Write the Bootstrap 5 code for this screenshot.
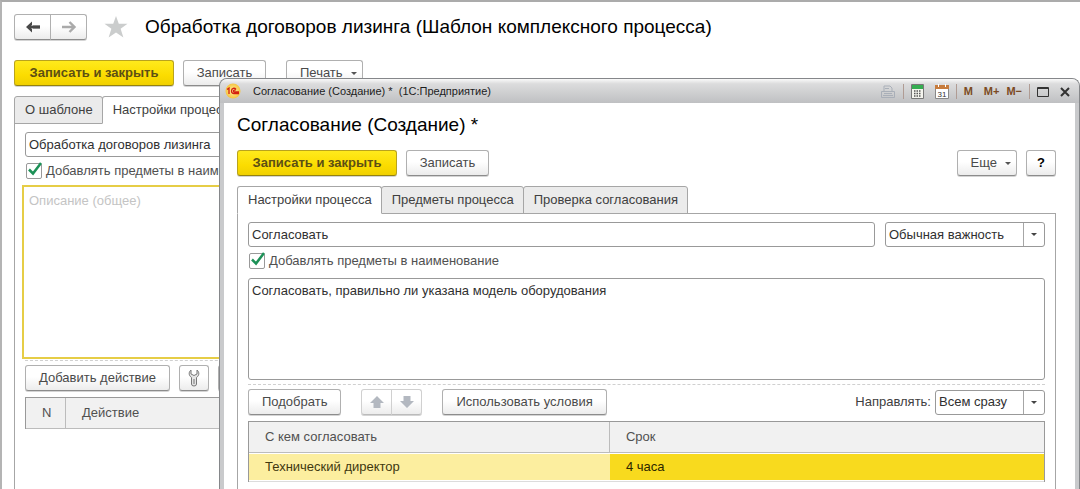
<!DOCTYPE html>
<html lang="ru">
<head>
<meta charset="utf-8">
<meta name="viewport" content="width=device-width, initial-scale=1">
<title>Обработка договоров лизинга</title>
<link href="https://cdn.jsdelivr.net/npm/bootstrap@5.3.0/dist/css/bootstrap.min.css" rel="stylesheet">
<style>
  body { font-family: "Liberation Sans", Arial, sans-serif; font-size: 13px; line-height: 16px; color: #404040; background: #fff; }
  .page-root { height: 100vh; }
  .app-window { min-height: 100vh; border-top: 2px solid #ababab; border-left: 2px solid #b4b4b4; padding: 12px 12px 0; }
  .form-title { font-size: 19px; line-height: 24px; color: #000; font-weight: 400; }
  .title-gap { margin-bottom: 13px; }
  .cmd-bar { gap: 9px; margin-bottom: 10px; }
  .app-cmd { margin-top: 20px; }
  .list-bar { margin-bottom: 6px; }
  .btn-form { --bs-btn-font-size: 13px; --bs-btn-line-height: 16px; --bs-btn-padding-y: 4px; --bs-btn-padding-x: 13px; --bs-btn-border-radius: 3px;
    --bs-btn-color: #4a4a4a; --bs-btn-border-color: #b0b0b0; --bs-btn-hover-color: #4a4a4a; --bs-btn-hover-border-color: #909090;
    height: 26px; white-space: nowrap; background: linear-gradient(#fff 45%, #ececec); border-bottom-color: #8c8c8c; box-shadow: 0 1px 0 #d4d4d4; }
  .btn-main { --bs-btn-color: #5c4f14; --bs-btn-hover-color: #5c4f14; --bs-btn-border-color: #b9a31d; font-weight: 700;
    background: linear-gradient(#ffea1c, #fbdc00 60%, #f0d000); border-bottom-color: #94820f; }
  .btn-wide { width: 160px; padding-left: 0; padding-right: 0; }
  .btn-mid { width: 83px; padding-left: 0; padding-right: 0; }
  .btn-menu { padding-right: 5px; }
  .btn-menu::after { content: ""; display: inline-block; margin-left: 8px; vertical-align: 2px; border: 3px solid transparent; border-top-color: #555; border-bottom: 0; }
  .btn-print { margin-left: 11px; }
  .btn-square { width: 30px; padding: 0; }
  .btn-arrow { width: 37px; padding: 0; }
  .btn-move { width: 31px; padding: 0; border-color: #d0d0d0; border-bottom-color: #bbb; }
  .btn-form svg { display: block; margin: auto; }
  .move-group { margin: 0 20px; }
  .tabs-form { --bs-nav-tabs-border-width: 0; }
  .tabs-form .nav-link { padding: 5px 9px 5px 10px; height: 28px; line-height: 16px; color: #404040; background: #ebebeb; border: 1px solid #a6a6a6; border-radius: 3px 3px 0 0; margin: 0 0 -1px -1px; white-space: nowrap; }
  .tabs-form .nav-item:first-child .nav-link { margin-left: 0; }
  .tabs-form .nav-link.active { background: #fff; border-color: #a6a6a6 #a6a6a6 #fff; color: #404040; position: relative; }
  .pane { border: 1px solid #a6a6a6; border-bottom: 0; padding: 8px 10px 0; }
  .field { font-size: 13px; line-height: 16px; padding: 3px; height: 25px; color: #303030; border: 1px solid #999; border-radius: 3px; background-color: #fff; }
  .row-gap { gap: 10px; }
  textarea.field { resize: none; display: block; padding-top: 4px; }
  .field::placeholder { color: #c4c4c4; }
  select.field { width: auto; padding-right: 26px; background-size: 21px 23px; background-position: right center;
    background-image: url("data:image/svg+xml,%3Csvg xmlns='http://www.w3.org/2000/svg' width='21' height='23'%3E%3Cpath d='M.5 0v23' stroke='%23a6a6a6'/%3E%3Cpath d='M8 10h6l-3 3z' fill='%23444'/%3E%3C/svg%3E"); }
  .sel-importance { flex: 0 0 160px; }
  .sel-route { flex: 0 0 110px; }
  .check { gap: 4px; margin: 6px 0 0 1px; height: 17px; color: #505050; white-space: nowrap; }
  .check input { appearance: none; width: 16px; height: 16px; margin: 0; border: 1px solid #999; border-radius: 2px; }
  .check-box { position: relative; width: 16px; height: 16px; flex: none; }
  .check-box svg { position: absolute; left: 0; top: -2px; pointer-events: none; }
  .note { height: 102px; }
  textarea.note-focus { height: 174px; border: 2px solid #e6cd46; border-radius: 0; margin: 5px 0 1px -3px; padding: 6px 5px; }
  .split { border-top: 1px dashed #d0d0d0; }
  .grid-form { border: 1px solid #999; border-bottom: 0; margin: 0; color: #505050; table-layout: fixed; width: 100%; border-collapse: separate; border-spacing: 0; }
  .grid-form th { font-weight: 400; background: #f1f1f1; height: 31px; padding: 0 16px; border-right: 1px solid #bcbcbc; border-bottom: 1px solid #bcbcbc; }
  .grid-form th:last-child { border-right: 0; }
  .grid-form td { height: 29px; padding: 0 16px; border-bottom: 1px solid #dcdcdc; color: #40380f; background: #fcee9f; box-shadow: inset 0 1px #fff, inset 0 -1px #fff; }
  .grid-form td.cell-current { background: #f8da1e; color: #2c2600; }
  .dialog { position: absolute; left: 219px; right: 0; top: 78px; bottom: 0; overflow: hidden; background: #c9cacc; border: 1px solid #85878a; border-bottom: 0; border-radius: 8px 8px 0 0; padding: 0 4px; }
  .dialog-bar { height: 24px; margin: 0 -4px; padding: 0 9px 0 5px; background: linear-gradient(#fafafa, #dcdcdd 20%, #bfc0c2); font-size: 11px; color: #1c1c1c; }
  .dialog-bar .tool { border: 0; background: none; padding: 0; display: block; color: #7b4a22; font-weight: 700; font-size: 11px; line-height: 16px; }
  .tools { gap: 7px; }
  .bar-sep { width: 1px; height: 15px; background: #b09c94; }
  .dialog-body { background: #fff; padding: 10px 19px 0 13px; }
</style>
</head>
<body>
<div class="page-root position-relative overflow-hidden">
  <main class="app-window d-flex flex-column">
    <header class="d-flex align-items-center">
      <div class="btn-group" role="group" aria-label="Навигация">
        <button class="btn btn-form btn-arrow" type="button" aria-label="Назад"><svg width="16" height="12" viewBox="0 0 16 12"><path d="M1 6 7 .5v4h8v3H7v4z" fill="#484848"/><path d="M5 6 8 3v1.500M5 6l3 3V7.500" fill="#fff"/><path d="M3 6h12" stroke="#484848" stroke-width="2.600"/></svg></button>
        <button class="btn btn-form btn-arrow" type="button" aria-label="Вперед"><svg width="16" height="12" viewBox="0 0 16 12"><path d="M8.500 1 13.500 6l-5 5M13.500 6H1" fill="none" stroke="#aaa" stroke-width="2.400"/></svg></button>
      </div>
      <svg class="ms-3" width="26" height="24" viewBox="-1 -1 28 26"><path fill="#cbcdcd" d="m13 0 3 8.500h9.500L18 14l3 9.500-8-5.500-8 5.500L8 14 .5 8.500H10z"/></svg>
      <h1 class="form-title mb-0 ms-3 text-nowrap">Обработка договоров лизинга (Шаблон комплексного процесса)</h1>
    </header>
    <div class="d-flex cmd-bar app-cmd">
      <button class="btn btn-form btn-main btn-wide" type="button">Записать и закрыть</button>
      <button class="btn btn-form btn-mid" type="button">Записать</button>
      <button class="btn btn-form btn-menu btn-print" type="button">Печать</button>
    </div>
    <ul class="nav nav-tabs tabs-form flex-nowrap">
      <li class="nav-item"><button class="nav-link" type="button">О шаблоне</button></li>
      <li class="nav-item"><button class="nav-link active" type="button">Настройки процесса</button></li>
    </ul>
    <section class="pane flex-grow-1">
      <input class="form-control field" type="text" value="Обработка договоров лизинга" aria-label="Наименование">
      <label class="check d-flex align-items-start"><span class="check-box d-block"><input class="d-block" type="checkbox" checked><svg width="17" height="16" viewBox="0 0 17 16"><path d="M3 8.500 7 12.500 15 2" fill="none" stroke="#1c9157" stroke-width="2.500"/></svg></span>Добавлять предметы в наименование</label>
      <textarea class="form-control field note-focus" placeholder="Описание (общее)" aria-label="Описание"></textarea>
      <div class="split mb-1"></div>
      <div class="d-flex cmd-bar list-bar">
        <button class="btn btn-form" type="button">Добавить действие</button>
        <button class="btn btn-form btn-square" type="button" aria-label="Настройка"><svg width="12" height="18" viewBox="0 0 12 18"><path d="M3 1C.5 3 .5 6.500 3.500 8.500V15q0 2 2.500 2t2.500-2V8.500c3-2 3-5.500.5-7.500v4L6 6.500 3 5z" fill="#e4e4e4" stroke="#777"/><path d="M6 10v5" stroke="#777"/></svg></button>
        <button class="btn btn-form btn-square" type="button" aria-label="Изменить"></button>
      </div>
      <table class="grid-form">
        <colgroup><col width="40"><col></colgroup>
        <thead><tr><th scope="col">N</th><th scope="col">Действие</th></tr></thead>
      </table>
    </section>
  </main>

  <div class="dialog d-flex flex-column" role="dialog" aria-labelledby="dlg-title">
    <div class="dialog-bar d-flex align-items-center flex-shrink-0">
      <svg width="16" height="16" viewBox="0 0 16 16"><defs><radialGradient id="sun"><stop offset="0" stop-color="#fff3a0"/><stop offset="1" stop-color="#f6c440"/></radialGradient></defs><circle cx="8" cy="8" r="7.500" fill="url(#sun)"/><path d="M2 6.500 4 5v6M11 6.500C9.500 4.500 6.500 5 6.500 8q0 2.500 2.500 2.500h5M10.500 7.500C9 6.500 8.200 7.500 8.500 8.300q.2.700 1.200.7H14" fill="none" stroke="#d3200f" stroke-width="1.300"/></svg>
      <span class="ms-2 ps-1 me-auto text-nowrap">Согласование (Создание) * &nbsp;(1С:Предприятие)</span>
      <div class="d-flex align-items-center tools">
        <button class="tool" type="button" aria-label="Печать"><svg width="16" height="16" viewBox="0 0 16 16"><path d="M4 7V2h6l2 2v3M1.500 7.500h13v6h-13zM4 9.500h8M5 4.500h4M3 11.500h10" fill="none" stroke="#a9afb8"/></svg></button>
        <span class="bar-sep"></span>
        <button class="tool" type="button" aria-label="Калькулятор"><svg width="13" height="15" viewBox="0 0 13 15"><path d="M.5.5h12v14H.5z" fill="#f4f4ee" stroke="#777"/><path d="M1 1h11v4H1z" fill="#35ad51"/><path d="M3 7h7M3 9.500h7M3 12h7" stroke="#555" stroke-width="1.500" stroke-dasharray="1.500 1"/></svg></button>
        <button class="tool ms-1" type="button" aria-label="Календарь"><svg width="14" height="15" viewBox="0 0 14 15"><path d="M.5 1.500h13v13H.5z" fill="#fff" stroke="#888"/><path d="M0 1h14v4H0z" fill="#c77c3d"/><path d="M3.500 0v3M10.500 0v3" stroke="#fff"/><text x="7" y="13" font-size="8" font-weight="400" text-anchor="middle" fill="#333">31</text></svg></button>
        <span class="bar-sep"></span>
        <button class="tool me-1" type="button">M</button>
        <button class="tool" type="button">M+</button>
        <button class="tool" type="button">M−</button>
        <span class="bar-sep"></span>
        <button class="tool" type="button" aria-label="Развернуть"><svg width="12" height="10" viewBox="0 0 12 10"><path d="M.5.500h11v9H.5zM0 1.500h12" fill="none" stroke="#333"/></svg></button>
        <button class="tool ms-1" type="button" aria-label="Закрыть"><svg width="10" height="10" viewBox="0 0 10 10"><path d="m1 1 8 8M9 1 1 9" stroke="#333" stroke-width="2"/></svg></button>
      </div>
    </div>
    <div class="dialog-body flex-grow-1 d-flex flex-column">
      <h2 class="form-title title-gap text-nowrap" id="dlg-title">Согласование (Создание) *</h2>
      <div class="d-flex cmd-bar">
        <button class="btn btn-form btn-main btn-wide" type="button">Записать и закрыть</button>
        <button class="btn btn-form btn-mid" type="button">Записать</button>
        <button class="btn btn-form btn-menu ms-auto" type="button">Еще</button>
        <button class="btn btn-form btn-square fw-bold text-black" type="button">?</button>
      </div>
      <ul class="nav nav-tabs tabs-form flex-nowrap">
        <li class="nav-item"><button class="nav-link active" type="button">Настройки процесса</button></li>
        <li class="nav-item"><button class="nav-link" type="button">Предметы процесса</button></li>
        <li class="nav-item"><button class="nav-link" type="button">Проверка согласования</button></li>
      </ul>
      <section class="pane flex-grow-1">
        <div class="d-flex row-gap">
          <input class="form-control field" type="text" value="Согласовать" aria-label="Наименование">
          <select class="form-select field sel-importance" aria-label="Важность"><option>Обычная важность</option></select>
        </div>
        <label class="check d-flex align-items-start"><span class="check-box d-block"><input class="d-block" type="checkbox" checked><svg width="17" height="16" viewBox="0 0 17 16"><path d="M3 8.500 7 12.500 15 2" fill="none" stroke="#1c9157" stroke-width="2.500"/></svg></span>Добавлять предметы в наименование</label>
        <textarea class="form-control field note mt-2" aria-label="Описание">Согласовать, правильно ли указана модель оборудования</textarea>
        <div class="split mt-1 mb-1"></div>
        <div class="d-flex align-items-center list-bar">
          <button class="btn btn-form" type="button">Подобрать</button>
          <div class="btn-group move-group" role="group" aria-label="Порядок">
            <button class="btn btn-form btn-move" type="button" aria-label="Вверх"><svg width="14" height="13" viewBox="0 0 14 13"><path d="m7 0 7 7h-3.500v5h-7V7H0z" fill="#b3b8c0"/></svg></button>
            <button class="btn btn-form btn-move" type="button" aria-label="Вниз"><svg width="14" height="13" viewBox="0 0 14 13"><path d="m7 12 7-7h-3.500V0h-7v5H0z" fill="#b3b8c0"/></svg></button>
          </div>
          <button class="btn btn-form" type="button">Использовать условия</button>
          <label class="ms-auto me-1" for="route">Направлять:</label>
          <select class="form-select field sel-route" id="route"><option>Всем сразу</option></select>
        </div>
        <table class="grid-form">
          <colgroup><col style="width:45.400%"><col></colgroup>
          <thead><tr><th scope="col">С кем согласовать</th><th scope="col">Срок</th></tr></thead>
          <tbody><tr><td>Технический директор</td><td class="cell-current">4 часа</td></tr></tbody>
        </table>
      </section>
    </div>
  </div>
</div>
<script src="https://cdn.jsdelivr.net/npm/bootstrap@5.3.0/dist/js/bootstrap.bundle.min.js"></script>
</body>
</html>
